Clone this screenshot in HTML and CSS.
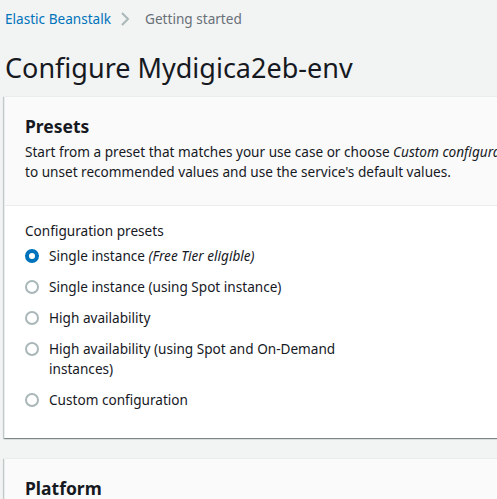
FILE: index.html
```html
<!DOCTYPE html>
<html>
<head>
<meta charset="utf-8">
<link rel="stylesheet" href="styles.css">
</head>
<body>
<div class="page">
  <nav class="breadcrumbs">
    <a class="crumb-link" href="#">Elastic Beanstalk</a>
    <svg class="chevron" width="12" height="16" viewBox="0 0 12 16"><path d="M3 2 L9 8 L3 14" fill="none" stroke="#aab7b8" stroke-width="2"/></svg>
    <span class="crumb-current">Getting started</span>
  </nav>
  <h1 class="title">Configure Mydigica2eb-env</h1>
  <section class="card">
    <header class="card-header">
      <h2 class="card-title">Presets</h2>
      <p class="card-desc">Start from a preset that matches your use case or choose <em>Custom configuration</em> to unset recommended values and use the service's default values.</p>
    </header>
    <div class="card-body">
      <div class="field-label">Configuration presets</div>
      <div class="radio-group">
        <label class="radio"><span class="dot checked"></span><span class="radio-text">Single instance <em>(Free Tier eligible)</em></span></label>
        <label class="radio"><span class="dot"></span><span class="radio-text">Single instance (using Spot instance)</span></label>
        <label class="radio"><span class="dot"></span><span class="radio-text">High availability</span></label>
        <label class="radio"><span class="dot"></span><span class="radio-text narrow">High availability (using Spot and On-Demand instances)</span></label>
        <label class="radio"><span class="dot"></span><span class="radio-text">Custom configuration</span></label>
      </div>
    </div>
  </section>
  <section class="card card-second">
    <header class="card-header">
      <h2 class="card-title">Platform</h2>
    </header>
  </section>
</div>
</body>
</html>
```
FILE: styles.css
```css
html, body {
  margin: 0;
  padding: 0;
  background: #f2f3f3;
  overflow: hidden;
}
body {
  font-family: "Noto Sans", "Open Sans", sans-serif;
  color: #16191f;
  font-size: 13.6px;
  line-height: 20px;
}
.page {
  width: 560px;
  padding-left: 4px;
}
.breadcrumbs {
  display: flex;
  align-items: center;
  height: 20px;
  padding-top: 9px;
  padding-left: 1px;
}
.crumb-link {
  color: #0073bb;
  text-decoration: none;
}
.chevron {
  margin: 0 14px 0 8px;
}
.crumb-current {
  color: #687078;
}
.title {
  margin: 21px 0 0 1px;
  font-size: 27px;
  line-height: 36px;
  font-weight: 400;
}
.card {
  margin-top: 10px;
  background: #fff;
  border-top: 1px solid #eaeded;
  border-left: 1px solid #eaeded;
  box-shadow: 0 1px 1px 0 rgba(0, 28, 36, 0.3), 1px 1px 1px 0 rgba(0, 28, 36, 0.15), -1px 1px 1px 0 rgba(0, 28, 36, 0.15);
}
.card-header {
  background: #fafafa;
  border-bottom: 1px solid #eaeded;
  padding: 17px 20px 23px 20px;
}
.card-title {
  margin: 0;
  font-size: 17.5px;
  line-height: 24px;
  font-weight: 700;
}
.card-desc {
  margin: 4px 0 0;
  width: 505px;
}
.card-body {
  padding: 15px 20px 28px;
}
.field-label {
  margin-bottom: 5px;
}
.radio-group {
  display: flex;
  flex-direction: column;
  gap: 11px;
}
.radio {
  display: flex;
  align-items: flex-start;
}
.dot {
  box-sizing: border-box;
  width: 14px;
  height: 14px;
  border: 2px solid #aab7b8;
  border-radius: 50%;
  margin: 3px 10px 0 0;
  flex: none;
}
.dot.checked {
  border: 4px solid #0073bb;
  background: #fff;
}
.radio-text.narrow {
  width: 300px;
}
.card-second {
  margin-top: 20px;
}
.card-second .card-header {
  border-bottom: none;
  padding-bottom: 20px;
}
```
